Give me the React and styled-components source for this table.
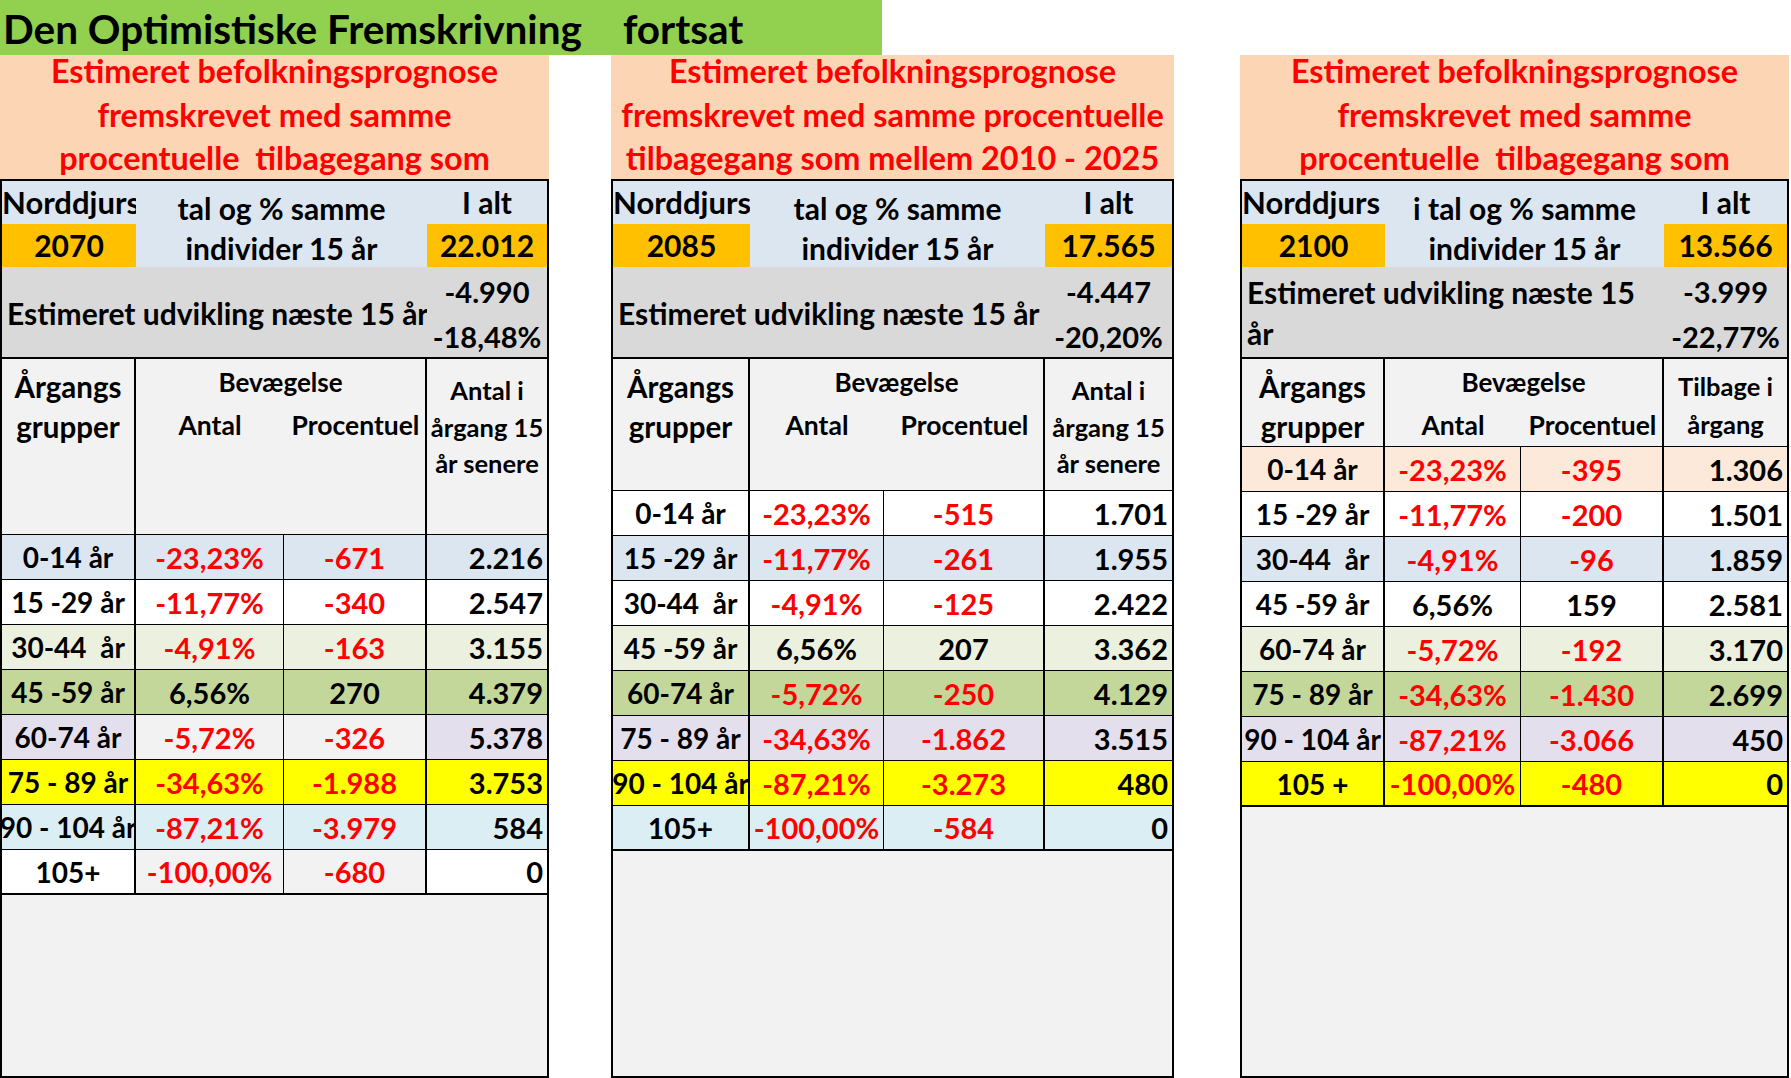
import React from "react";
import styled, { createGlobalStyle } from "styled-components";

const GlobalStyle = createGlobalStyle`
  html, body { margin: 0; padding: 0; background: #ffffff; overflow: hidden; }
  body { font-family: Lato, "Open Sans", "DejaVu Sans", sans-serif; }
`;

const C = {
  blue: "#dce6f1",
  white: "#ffffff",
  lgreen: "#ebf1de",
  green: "#c4d79b",
  lav: "#e4dfec",
  yellow: "#ffff00",
  cyan: "#daeef3",
  peach: "#fde9d9",
  grey: "#f2f2f2",
};

const Page = styled.div`
  width: 1791px;
  height: 1078px;
  display: flex;
  flex-direction: column;
  font-weight: 700;
  color: #000;
`;

const TitleBar = styled.div`
  width: 882px;
  height: 55px;
  flex: none;
  box-sizing: border-box;
  background: #92d050;
  display: flex;
  align-items: center;
  padding: 3px 0 0 3px;
  font-size: 40.5px;
  line-height: 1;
  white-space: nowrap;
`;

const TitleSuffix = styled.span`
  margin-left: 41px;
`;

const Sheets = styled.div`
  display: flex;
  flex: 1;
  min-height: 0;
`;

const Sheet = styled.section`
  width: ${(p) => p.$w}px;
  margin-left: ${(p) => p.$ml}px;
  flex: none;
  display: flex;
  flex-direction: column;
`;

const Banner = styled.div`
  height: 124px;
  flex: none;
  background: #fcd5b4;
  color: #ff0000;
  font-size: 32.4px;
  text-align: center;
  white-space: pre;
`;

const BannerLine = styled.div`
  height: 43.5px;
  line-height: 31px;
`;

const Grid = styled.div`
  flex: 1;
  box-sizing: border-box;
  border: 2px solid #000;
  display: grid;
  grid-template-columns: ${(p) => p.$cols.map((c) => c + "px").join(" ")};
  grid-template-rows: 43px 43px 92px ${(p) => p.$head}px repeat(8, 45px) 1fr;
  background: ${C.grey};
`;

const InfoLabel = styled.div`
  grid-column: 1;
  grid-row: 1;
  background: ${C.blue};
  font-size: 31px;
  line-height: 43px;
  white-space: nowrap;
  overflow: hidden;
`;

const YearCell = styled.div`
  grid-column: ${(p) => p.$col};
  grid-row: 2;
  background: #ffc000;
  font-size: 30px;
  line-height: 43px;
  text-align: center;
  white-space: nowrap;
  overflow: hidden;
`;

const TotalLabel = styled.div`
  grid-column: 4;
  grid-row: 1;
  background: ${C.blue};
  font-size: 30px;
  line-height: 43px;
  text-align: center;
`;

const InfoMiddle = styled.div`
  grid-column: 2 / 4;
  grid-row: 1 / 3;
  background: ${C.blue};
  box-sizing: border-box;
  padding-top: 7px;
  font-size: 30px;
  line-height: 40px;
  text-align: center;
  white-space: nowrap;
  overflow: hidden;
`;

const GreyLabel = styled.div`
  grid-column: 1 / 4;
  grid-row: 3;
  background: #d9d9d9;
  border-bottom: 2px solid #000;
  display: flex;
  flex-direction: column;
  justify-content: center;
  padding: 2px 0 0 5px;
  font-size: 30px;
  line-height: 41px;
  white-space: nowrap;
`;

const GreyValues = styled.div`
  grid-column: 4;
  grid-row: 3;
  background: #d9d9d9;
  border-bottom: 2px solid #000;
  display: flex;
  flex-direction: column;
  justify-content: center;
  align-items: center;
  padding-top: 3px;
  font-size: 29px;
  line-height: 45px;
  white-space: nowrap;
`;

const HeadCell = styled.div`
  grid-row: 4;
  grid-column: ${(p) => p.$col};
  background: ${C.grey};
  border-bottom: 1px solid #000;
  border-right: ${(p) => (p.$edge ? 2 : 0)}px solid #000;
  box-sizing: border-box;
  padding-top: ${(p) => p.$pt}px;
  font-size: ${(p) => p.$fs}px;
  line-height: ${(p) => p.$lh}px;
  text-align: center;
  white-space: nowrap;
  overflow: hidden;
`;

const HeadLine = styled.div``;

const SubHeads = styled.div`
  display: grid;
  grid-template-columns: ${(p) => p.$cols};
  margin-top: 3px;
  font-size: 26.5px;
  line-height: 40px;
`;

const DataCell = styled.div`
  box-sizing: border-box;
  min-width: 0;
  overflow: hidden;
  white-space: pre;
  display: flex;
  align-items: center;
  justify-content: ${(p) => (p.$right ? "flex-end" : "center")};
  padding-right: ${(p) => (p.$right ? 4 : 0)}px;
  background: ${(p) => p.$bg};
  color: ${(p) => (p.$red ? "#ff0000" : "#000000")};
  border-right: ${(p) => p.$br}px solid #000;
  border-bottom: ${(p) => p.$bb}px solid #000;
  font-size: ${(p) => (p.$label ? 28 : 29)}px;
`;

const Filler = styled.div`
  grid-column: 1 / -1;
  background: ${C.grey};
`;

const bannerA = ["Estimeret befolkningsprognose", "fremskrevet med samme", "procentuelle  tilbagegang som"];
const bannerB = [
  "Estimeret befolkningsprognose",
  "fremskrevet med samme procentuelle",
  "tilbagegang som mellem 2010 - 2025",
];

const sheets = [
  {
    ml: 0,
    w: 549,
    cols: [134, 148, 143, 120],
    head: 176,
    banner: bannerA,
    year: "2070",
    total: "22.012",
    middle: ["tal og % samme", "individer 15 år"],
    grey: ["Estimeret udvikling næste 15 år"],
    dev: ["-4.990", "-18,48%"],
    after: ["Antal i", "årgang 15", "år senere"],
    afterPt: 13,
    afterLh: 36.5,
    rows: [
      ["0-14 år", "-23,23%", "-671", "2.216", C.blue],
      ["15 -29 år", "-11,77%", "-340", "2.547", C.white],
      ["30-44  år", "-4,91%", "-163", "3.155", C.lgreen],
      ["45 -59 år", "6,56%", "270", "4.379", C.green],
      ["60-74 år", "-5,72%", "-326", "5.378", C.lav, C.grey],
      ["75 - 89 år", "-34,63%", "-1.988", "3.753", C.yellow],
      ["90 - 104 år", "-87,21%", "-3.979", "584", C.cyan],
      ["105+", "-100,00%", "-680", "0", C.white, C.grey],
    ],
  },
  {
    ml: 62,
    w: 563,
    cols: [137, 134, 161, 127],
    head: 132,
    banner: bannerB,
    year: "2085",
    total: "17.565",
    middle: ["tal og % samme", "individer 15 år"],
    grey: ["Estimeret udvikling næste 15 år"],
    dev: ["-4.447", "-20,20%"],
    after: ["Antal i", "årgang 15", "år senere"],
    afterPt: 13,
    afterLh: 36.5,
    rows: [
      ["0-14 år", "-23,23%", "-515", "1.701", C.white],
      ["15 -29 år", "-11,77%", "-261", "1.955", C.blue],
      ["30-44  år", "-4,91%", "-125", "2.422", C.white],
      ["45 -59 år", "6,56%", "207", "3.362", C.lgreen],
      ["60-74 år", "-5,72%", "-250", "4.129", C.green],
      ["75 - 89 år", "-34,63%", "-1.862", "3.515", C.lav],
      ["90 - 104 år", "-87,21%", "-3.273", "480", C.yellow],
      ["105+", "-100,00%", "-584", "0", C.cyan],
    ],
  },
  {
    ml: 66,
    w: 549,
    cols: [143, 136, 143, 123],
    head: 88,
    banner: bannerA,
    year: "2100",
    total: "13.566",
    middle: ["i tal og % samme", "individer 15 år"],
    grey: ["Estimeret udvikling næste 15", "år"],
    dev: ["-3.999", "-22,77%"],
    after: ["Tilbage i", "årgang"],
    afterPt: 8,
    afterLh: 38,
    rows: [
      ["0-14 år", "-23,23%", "-395", "1.306", C.peach],
      ["15 -29 år", "-11,77%", "-200", "1.501", C.white],
      ["30-44  år", "-4,91%", "-96", "1.859", C.blue],
      ["45 -59 år", "6,56%", "159", "2.581", C.white],
      ["60-74 år", "-5,72%", "-192", "3.170", C.lgreen],
      ["75 - 89 år", "-34,63%", "-1.430", "2.699", C.green],
      ["90 - 104 år", "-87,21%", "-3.066", "450", C.lav],
      ["105 +", "-100,00%", "-480", "0", C.yellow],
    ],
  },
];

function SheetTable({ s }) {
  const last = s.rows.length - 1;
  return (
    <Sheet $w={s.w} $ml={s.ml}>
      <Banner>
        {s.banner.map((l, i) => (
          <BannerLine key={i}>{l}</BannerLine>
        ))}
      </Banner>
      <Grid $cols={s.cols} $head={s.head}>
        <InfoLabel>Norddjurs</InfoLabel>
        <YearCell $col={1}>{s.year}</YearCell>
        <InfoMiddle>
          {s.middle.map((l, i) => (
            <div key={i}>{l}</div>
          ))}
        </InfoMiddle>
        <TotalLabel>I alt</TotalLabel>
        <YearCell $col={4}>{s.total}</YearCell>
        <GreyLabel>
          {s.grey.map((l, i) => (
            <div key={i}>{l}</div>
          ))}
        </GreyLabel>
        <GreyValues>
          {s.dev.map((l, i) => (
            <div key={i}>{l}</div>
          ))}
        </GreyValues>

        <HeadCell $col="1" $edge $pt={8} $lh={40} $fs={29.5}>
          <HeadLine>Årgangs</HeadLine>
          <HeadLine>grupper</HeadLine>
        </HeadCell>
        <HeadCell $col="2 / 4" $edge $pt={3} $lh={40} $fs={26}>
          <HeadLine>Bevægelse</HeadLine>
          <SubHeads $cols={`${s.cols[1]}px ${s.cols[2]}px`}>
            <span>Antal</span>
            <span>Procentuel</span>
          </SubHeads>
        </HeadCell>
        <HeadCell $col="4" $pt={s.afterPt} $lh={s.afterLh} $fs={25.5}>
          {s.after.map((l, i) => (
            <HeadLine key={i}>{l}</HeadLine>
          ))}
        </HeadCell>

        {s.rows.map((r, i) => {
          const bb = i === last ? 2 : 1;
          const mid = r[5] || r[4];
          return (
            <React.Fragment key={i}>
              <DataCell $label $bg={r[4]} $br={2} $bb={bb}>
                {r[0]}
              </DataCell>
              <DataCell $bg={mid} $br={1} $bb={bb} $red={r[1].startsWith("-")}>
                {r[1]}
              </DataCell>
              <DataCell $bg={mid} $br={2} $bb={bb} $red={r[2].startsWith("-")}>
                {r[2]}
              </DataCell>
              <DataCell $right $bg={r[4]} $br={0} $bb={bb}>
                {r[3]}
              </DataCell>
            </React.Fragment>
          );
        })}
        <Filler />
      </Grid>
    </Sheet>
  );
}

export default function App() {
  return (
    <>
      <GlobalStyle />
      <Page>
        <TitleBar>
          <span>Den Optimistiske Fremskrivning</span>
          <TitleSuffix>fortsat</TitleSuffix>
        </TitleBar>
        <Sheets>
          {sheets.map((s, i) => (
            <SheetTable key={i} s={s} />
          ))}
        </Sheets>
      </Page>
    </>
  );
}
